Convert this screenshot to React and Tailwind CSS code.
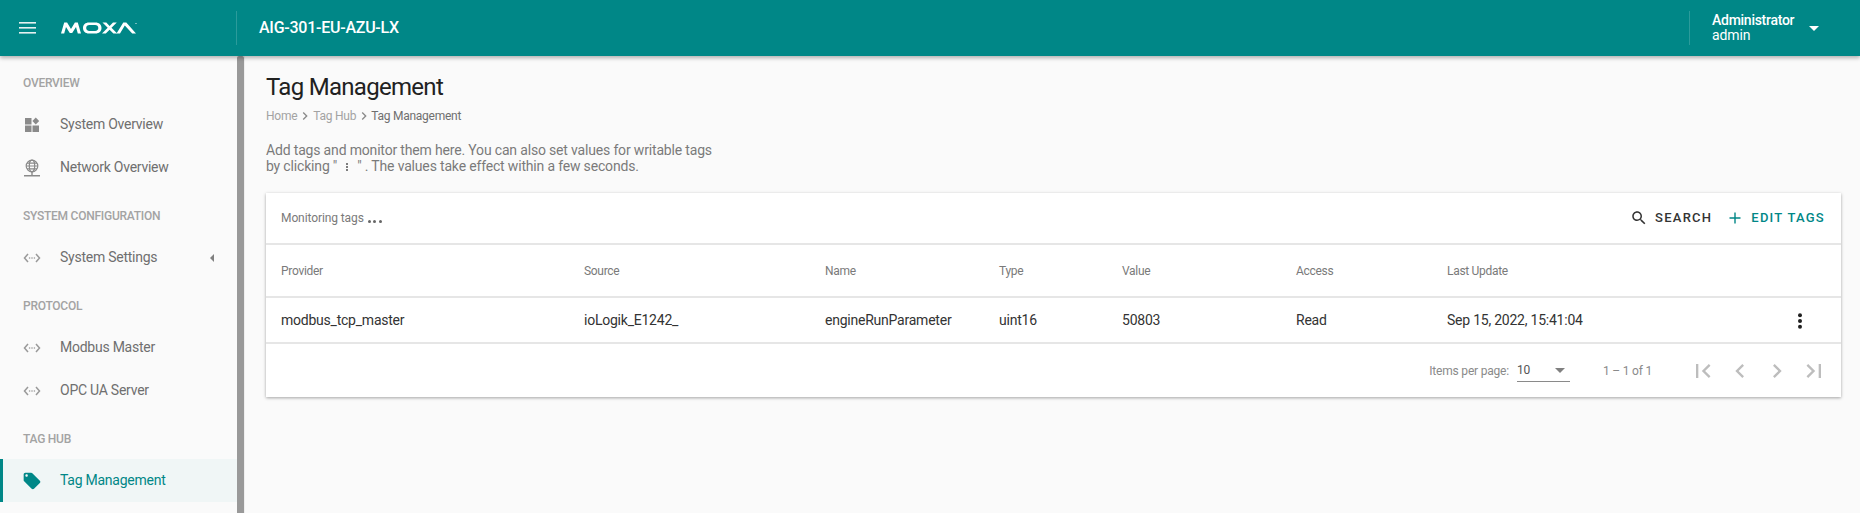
import React from "react";

const Ellip = () => (
  <svg width="24" height="24" viewBox="0 0 24 24" fill="#999999">
    <path d="M8 8 4.500 12 8 16M16 8l3.500 4L16 16" fill="none" stroke="#999999" strokeWidth="1.500" />
    <circle cx="9.600" cy="12" r="0.800" />
    <circle cx="12" cy="12" r="0.800" />
    <circle cx="14.400" cy="12" r="0.800" />
  </svg>
);

const DashIcon = () => (
  <svg width="24" height="24" viewBox="0 0 24 24" fill="#8a8a8a">
    <rect x="5" y="5" width="6.500" height="6.500" />
    <rect x="5" y="12.500" width="6.500" height="6.500" />
    <rect x="12.500" y="12.500" width="6.500" height="6.500" />
    <path d="M15.800 4.500 19.200 8 15.800 11.500 12.400 8z" />
  </svg>
);

const GlobeIcon = () => (
  <svg width="24" height="24" viewBox="0 0 24 24" fill="none" stroke="#8a8a8a" strokeWidth="1.200">
    <circle cx="12" cy="10" r="5.800" />
    <ellipse cx="12" cy="10" rx="2.700" ry="5.800" />
    <path d="M6.200 10h11.600M7 7.200h10M7 12.800h10" />
    <path d="M12 16v3.500M4 19.700h16" strokeWidth="1.400" />
  </svg>
);

const TagIcon = () => (
  <svg width="20" height="20" viewBox="0 0 24 24" fill="#008787">
    <path d="M21.410 11.580l-9-9C12.050 2.220 11.550 2 11 2H4c-1.100 0-2 .9-2 2v7c0 .55.220 1.050.590 1.420l9 9c.36.360.860.580 1.410.580.550 0 1.050-.220 1.410-.590l7-7c.370-.360.590-.860.590-1.410 0-.550-.230-1.060-.590-1.420zM5.500 7C4.670 7 4 6.330 4 5.500S4.670 4 5.500 4 7 4.670 7 5.500 6.330 7 5.500 7z" />
  </svg>
);

const Moxa = () => (
  <svg width="76" height="12" viewBox="0 0 76 12" fill="#fff">
    <path d="M0 11.500 3.200.5h2.900L10 6.900 13.900.5h2.900l3.200 11h-3.200l-1.800-6.500-3.800 6.100H8.800L5 5l-1.800 6.500z" />
    <path fillRule="evenodd" d="M28 .5h6.500c3.600 0 6 2.200 6 5.500s-2.400 5.500-6 5.500H28c-3.600 0-6-2.200-6-5.500S24.400.5 28 .5zm.4 2.600c-2 0-3.200 1.100-3.200 2.900s1.200 2.900 3.200 2.900h5.700c2 0 3.200-1.100 3.200-2.900s-1.200-2.900-3.200-2.900z" />
    <path d="M41.500.5h3.800l3.300 3.400L52 .5h3.800l-5.300 5.200 5.700 5.800h-3.800l-3.800-3.800-3.800 3.800H41l5.700-5.800z" />
    <path d="M55.500 11.500 62.300.5h3L75 11.500h-3.800L63.800 3.400 59 11.500z" />
    <circle cx="75" cy="1.500" r="0.600" />
  </svg>
);

const SectionLabel = ({ children, className = "" }) => (
  <div className={`pl-[23px] text-[12px] leading-[16px] font-medium tracking-[-0.25px] text-[#a3a3a3] ${className}`}>{children}</div>
);

const NavItem = ({ icon, children, caret, active }) => (
  <div
    className={`relative flex h-[43px] items-center pl-[24px] text-[14px] ${
      active ? "bg-[#f0f6f6] text-[#008787]" : "text-[#6f6f6f]"
    }`}
  >
    {active && <div className="absolute left-0 top-0 h-full w-[3px] bg-[#008787]" />}
    <span className="-ml-[4px] mr-[16px] flex h-[24px] w-[24px] items-center justify-center">{icon}</span>
    <span className="tracking-[-0.25px]">{children}</span>
    {caret && <span className="ml-auto mr-[23px] h-0 w-0 border-y-[4px] border-r-[4px] border-y-transparent border-r-[#808080]" />}
  </div>
);

const cols = [
  ["Provider", "modbus_tcp_master", "w-[303px]"],
  ["Source", "ioLogik_E1242_", "w-[241px]"],
  ["Name", "engineRunParameter", "w-[174px]"],
  ["Type", "uint16", "w-[123px]"],
  ["Value", "50803", "w-[174px]"],
  ["Access", "Read", "w-[151px]"],
  ["Last Update", "Sep 15, 2022, 15:41:04", "w-[340px]"],
];

const PagerIcon = ({ d }) => (
  <svg width="28" height="28" viewBox="0 0 24 24" fill="#bdbdbd">
    <path d={d} />
  </svg>
);

const Crumb = () => (
  <svg width="16" height="16" viewBox="0 0 24 24" fill="#8a8a8a">
    <path d="M8.590 16.590 13.170 12 8.590 7.410 10 6l6 6-6 6z" />
  </svg>
);

export default function App() {
  return (
    <div className="flex h-[513px] w-[1860px] flex-col overflow-hidden bg-[#fafafa] font-['Roboto',sans-serif] text-[#212121]">
      <header className="relative z-10 flex h-[56px] shrink-0 items-center bg-[#008787] text-white shadow-[0_2px_4px_rgba(0,0,0,0.3)]">
        <div className="flex w-[236px] items-center pl-[19px]">
          <svg width="17" height="12" viewBox="0 0 17 12" fill="#e4f1f1">
            <rect y="0" width="17" height="1.600" />
            <rect y="5" width="17" height="1.600" />
            <rect y="10" width="17" height="1.600" />
          </svg>
          <span className="ml-[25px] flex"><Moxa /></span>
        </div>
        <div className="h-[34px] w-px bg-[#2b9b9b]" />
        <div className="ml-[22px] text-[16px] font-medium leading-[24px] tracking-[-0.25px]">AIG-301-EU-AZU-LX</div>
        <div className="ml-auto flex items-center">
          <div className="h-[34px] w-px bg-[#2b9b9b]" />
          <div className="-mt-[1px] ml-[22px] w-[83px] text-[14px] leading-[15px]">
            <div className="font-medium tracking-[-0.27px]">Administrator</div>
            <div className="tracking-[-0.1px]">admin</div>
          </div>
          <span className="ml-[14px] mr-[41px] mt-[1px] h-0 w-0 border-x-[5px] border-t-[5px] border-x-transparent border-t-white" />
        </div>
      </header>

      <div className="flex min-h-0 flex-1">
        <aside className="flex w-[237px] shrink-0 flex-col bg-[#fafafa]">
          <SectionLabel className="mt-[19px]">OVERVIEW</SectionLabel>
          <div className="mt-[12px]">
            <NavItem icon={<DashIcon />}>System Overview</NavItem>
            <NavItem icon={<GlobeIcon />}>Network Overview</NavItem>
          </div>
          <SectionLabel className="mt-[19px]">SYSTEM CONFIGURATION</SectionLabel>
          <div className="mt-[12px]">
            <NavItem icon={<Ellip />} caret>System Settings</NavItem>
          </div>
          <SectionLabel className="mt-[19px]">PROTOCOL</SectionLabel>
          <div className="mt-[12px]">
            <NavItem icon={<Ellip />}>Modbus Master</NavItem>
            <NavItem icon={<Ellip />}>OPC UA Server</NavItem>
          </div>
          <SectionLabel className="mt-[19px]">TAG HUB</SectionLabel>
          <div className="mt-[12px]">
            <NavItem active icon={<TagIcon />}>Tag Management</NavItem>
          </div>
        </aside>
        <div className="w-[7px] shrink-0 rounded-t-[2px] bg-[#999999]" />
        <main className="min-w-0 flex-1 border-l border-[#eeeeee] pl-[21px] pr-[19px]">
          <h1 className="mt-[15px] text-[24px] font-normal leading-[32px] tracking-[-0.7px]">Tag Management</h1>
          <div className="mt-[5px] flex items-center text-[12px] leading-[16px] tracking-[-0.25px] text-[#a3a3a3]">
            <span>Home</span>
            <Crumb />
            <span>Tag Hub</span>
            <Crumb />
            <span className="-ml-[1px] text-[#6f6f6f]">Tag Management</span>
          </div>
          <p className="mt-[18px] text-[14px] leading-[16px] tracking-[-0.17px] text-[#7a7a7a]">
            Add tags and monitor them here. You can also set values for writable tags
            <br />
            by clicking "
            <span className="mx-[4px] inline-flex w-[12px] justify-center align-[-2px]">
              <svg width="4" height="12" viewBox="0 0 4 12" fill="#555"><circle cx="2" cy="3" r="1" /><circle cx="2" cy="6" r="1" /><circle cx="2" cy="9" r="1" /></svg>
            </span>
            " . The values take effect within a few seconds.
          </p>

          <section className="mt-[19px] w-[1575px] bg-white shadow-[0_1px_3px_rgba(0,0,0,0.35)]">
            <div className="flex h-[52px] items-center border-b-2 border-[#e6e6e6] pl-[15px] pr-[16px]">
              <span className="text-[12px] tracking-[-0.1px] text-[#7a7a7a]">Monitoring tags</span>
              <span className="ml-[4px] mt-[6px] flex gap-[2.5px]">
                <i className="h-[3px] w-[3px] rounded-full bg-[#666666]" />
                <i className="h-[3px] w-[3px] rounded-full bg-[#666666]" />
                <i className="h-[3px] w-[3px] rounded-full bg-[#666666]" />
              </span>
              <div className="ml-auto flex items-center text-[13px] font-medium tracking-[1.25px]">
                <svg width="18" height="18" viewBox="0 0 24 24" fill="#333333" className="mr-[7px]">
                  <path d="M15.500 14h-.79l-.28-.27C15.410 12.590 16 11.110 16 9.500 16 5.910 13.090 3 9.500 3S3 5.910 3 9.500 5.910 16 9.500 16c1.610 0 3.090-.59 4.230-1.570l.27.28v.79l5 4.990L20.490 19l-4.990-5zm-6 0C7.010 14 5 11.990 5 9.500S7.010 5 9.500 5 14 7.010 14 9.500 11.990 14 9.500 14z" />
                </svg>
                <span className="text-[#333333]">SEARCH</span>
                <svg width="18" height="18" viewBox="0 0 18 18" fill="#008787" className="ml-[14px] mr-[7px]">
                  <path d="M8.300 3.500h1.400v4.800h4.800v1.400H9.700v4.800H8.300V9.700H3.500V8.300h4.800z" />
                </svg>
                <span className="text-[#008787]">EDIT TAGS</span>
              </div>
            </div>
            <div className="flex h-[53px] items-center border-b-2 border-[#e6e6e6] pl-[15px] text-[12px] tracking-[-0.3px] text-[#7a7a7a]">
              {cols.map(([h, , w]) => (
                <div key={h} className={w}>{h}</div>
              ))}
            </div>
            <div className="relative flex h-[46px] items-center border-b-2 border-[#e6e6e6] pl-[15px] pt-[1px] text-[14px] tracking-[-0.23px] text-[#333333]">
              {cols.map(([h, v, w]) => (
                <div key={h} className={w}>{v}</div>
              ))}
              <svg width="24" height="24" viewBox="0 0 24 24" fill="#212121" className="ml-auto mr-[29px]">
                <circle cx="12" cy="6.300" r="2" />
                <circle cx="12" cy="12" r="2" />
                <circle cx="12" cy="17.700" r="2" />
              </svg>
            </div>
            <div className="flex h-[53px] items-center text-[12px] tracking-[-0.2px] text-[#8a8a8a]">
              <span className="ml-auto">Items per page:</span>
              <div className="ml-[8px] flex h-[23px] w-[53px] items-center justify-between border-b border-[#8a8a8a] text-[#555555]">
                <span>10</span>
                <span className="mr-[5px] h-0 w-0 border-x-[5px] border-t-[5px] border-x-transparent border-t-[#808080]" />
              </div>
              <span className="ml-[33px] mr-[37px]">1 – 1 of 1</span>
              <div className="mr-[13px] flex gap-[9px]">
                <PagerIcon d="M18.410 16.590 13.820 12l4.590-4.590L17 6l-6 6 6 6zM6 6h2v12H6z" />
                <PagerIcon d="M15.410 7.410 14 6l-6 6 6 6 1.410-1.410L10.830 12z" />
                <PagerIcon d="M8.590 16.590 13.170 12 8.590 7.410 10 6l6 6-6 6z" />
                <PagerIcon d="M5.590 7.410 10.180 12l-4.590 4.590L7 18l6-6-6-6zM16 6h2v12h-2z" />
              </div>
            </div>
          </section>
        </main>
      </div>
    </div>
  );
}
